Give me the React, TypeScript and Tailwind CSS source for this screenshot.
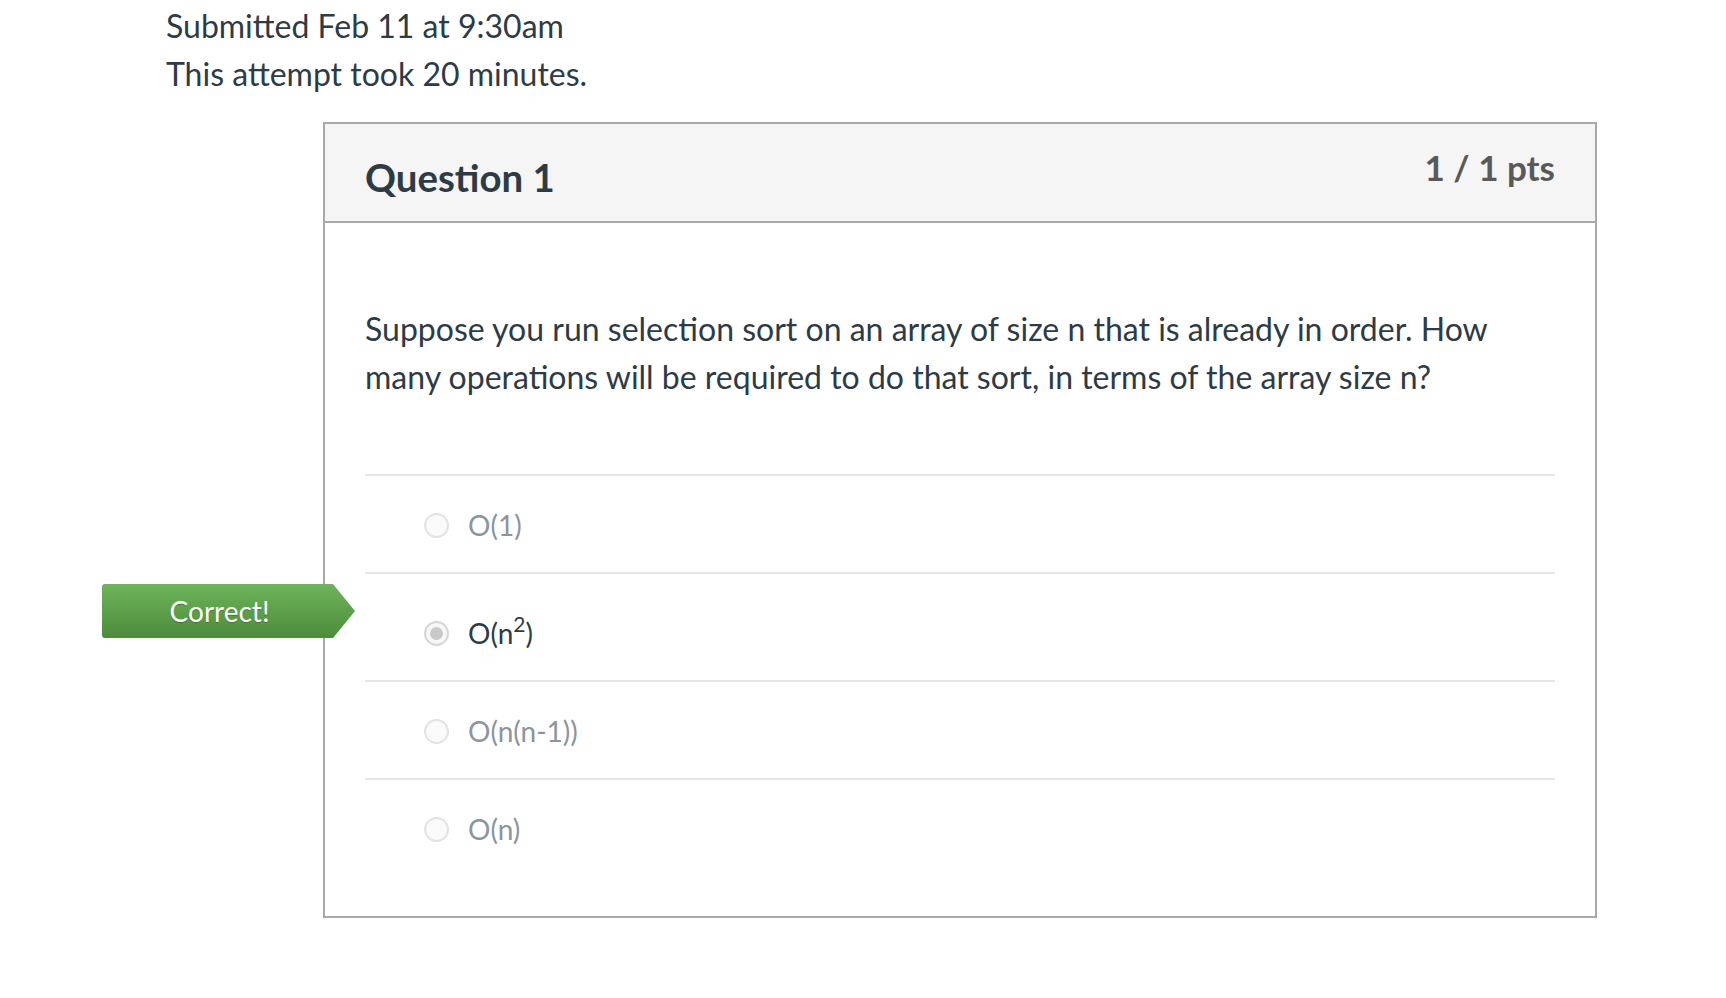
import React from "react";

type Answer = { id: string; label: React.ReactNode; selected?: boolean };

const ANSWERS: Answer[] = [
  { id: "a", label: "O(1)" },
  {
    id: "b",
    label: (
      <>
        O(n<sup className="text-[0.75em] top-[-0.55em]">2</sup>)
      </>
    ),
    selected: true,
  },
  { id: "c", label: "O(n(n-1))" },
  { id: "d", label: "O(n)" },
];

const Radio: React.FC<{ checked?: boolean }> = ({ checked }) => (
  <span
    className={
      checked
        ? "flex h-[25px] w-[25px] shrink-0 items-center justify-center rounded-full border-2 border-[#d6d6d6] bg-[#f7f7f7]"
        : "block h-[25px] w-[25px] shrink-0 rounded-full border-2 border-[#e3e3e3] bg-[#fafafa]"
    }
  >
    {checked && <span className="block h-[13px] w-[13px] rounded-full bg-[#c9c9c9]" />}
  </span>
);

const CorrectFlag: React.FC = () => (
  <div
    className="absolute left-[-263px] top-[10px] flex h-[54px] w-[253px] items-center rounded-l-[3px] bg-gradient-to-b from-[#6db45a] to-[#4d8c3b]"
    style={{ clipPath: "polygon(0 0, 231px 0, 253px 50%, 231px 100%, 0 100%)" }}
  >
    <span className="w-[231px] pl-[4px] text-center text-[28px] leading-none text-white [text-shadow:0_1px_1px_rgba(0,0,0,0.25)]">
      Correct!
    </span>
  </div>
);

export default function App() {
  return (
    <div className="min-h-screen bg-white font-['Lato','Liberation_Sans',sans-serif] text-[#2d3b45]">
      <div className="pl-[166px] pt-[2px] text-[32px] leading-[48px]">
        <p>Submitted Feb 11 at 9:30am</p>
        <p>This attempt took 20 minutes.</p>
      </div>

      <div className="ml-[323px] mt-[24px] w-[1274px] border-2 border-[#a9a9a9]">
        <div className="flex h-[99px] items-start justify-between border-b-2 border-[#a9a9a9] bg-[#f5f5f5] px-[40px]">
          <h2 className="mt-[31px] text-[38.4px] font-bold leading-[44px]">Question 1</h2>
          <div className="mt-[23px] text-[35px] font-bold leading-[40px] text-[#595959]">1 / 1 pts</div>
        </div>

        <div className="px-[40px] pb-[40px] pt-[82px]">
          <p className="text-[32px] leading-[48px]">
            Suppose you run selection sort on an array of size n that is already in order. How many
            operations will be required to do that sort, in terms of the array size n?
          </p>

          <div className="mt-[73px]">
            {ANSWERS.map((a) => (
              <div
                key={a.id}
                className={
                  a.selected
                    ? "relative flex h-[108px] items-center gap-[19px] border-t-2 border-[#e6e6e6] pl-[59px] pt-[12px]"
                    : "relative flex h-[98px] items-center gap-[19px] border-t-2 border-[#e6e6e6] pl-[59px] pt-[2px]"
                }
              >
                {a.selected && <CorrectFlag />}
                <Radio checked={a.selected} />
                <span
                  className={
                    a.selected
                      ? "text-[28px] leading-[40px] text-[#2d3b45]"
                      : "text-[28px] leading-[40px] text-[#8b959c]"
                  }
                >
                  {a.label}
                </span>
              </div>
            ))}
          </div>
        </div>
      </div>
    </div>
  );
}
